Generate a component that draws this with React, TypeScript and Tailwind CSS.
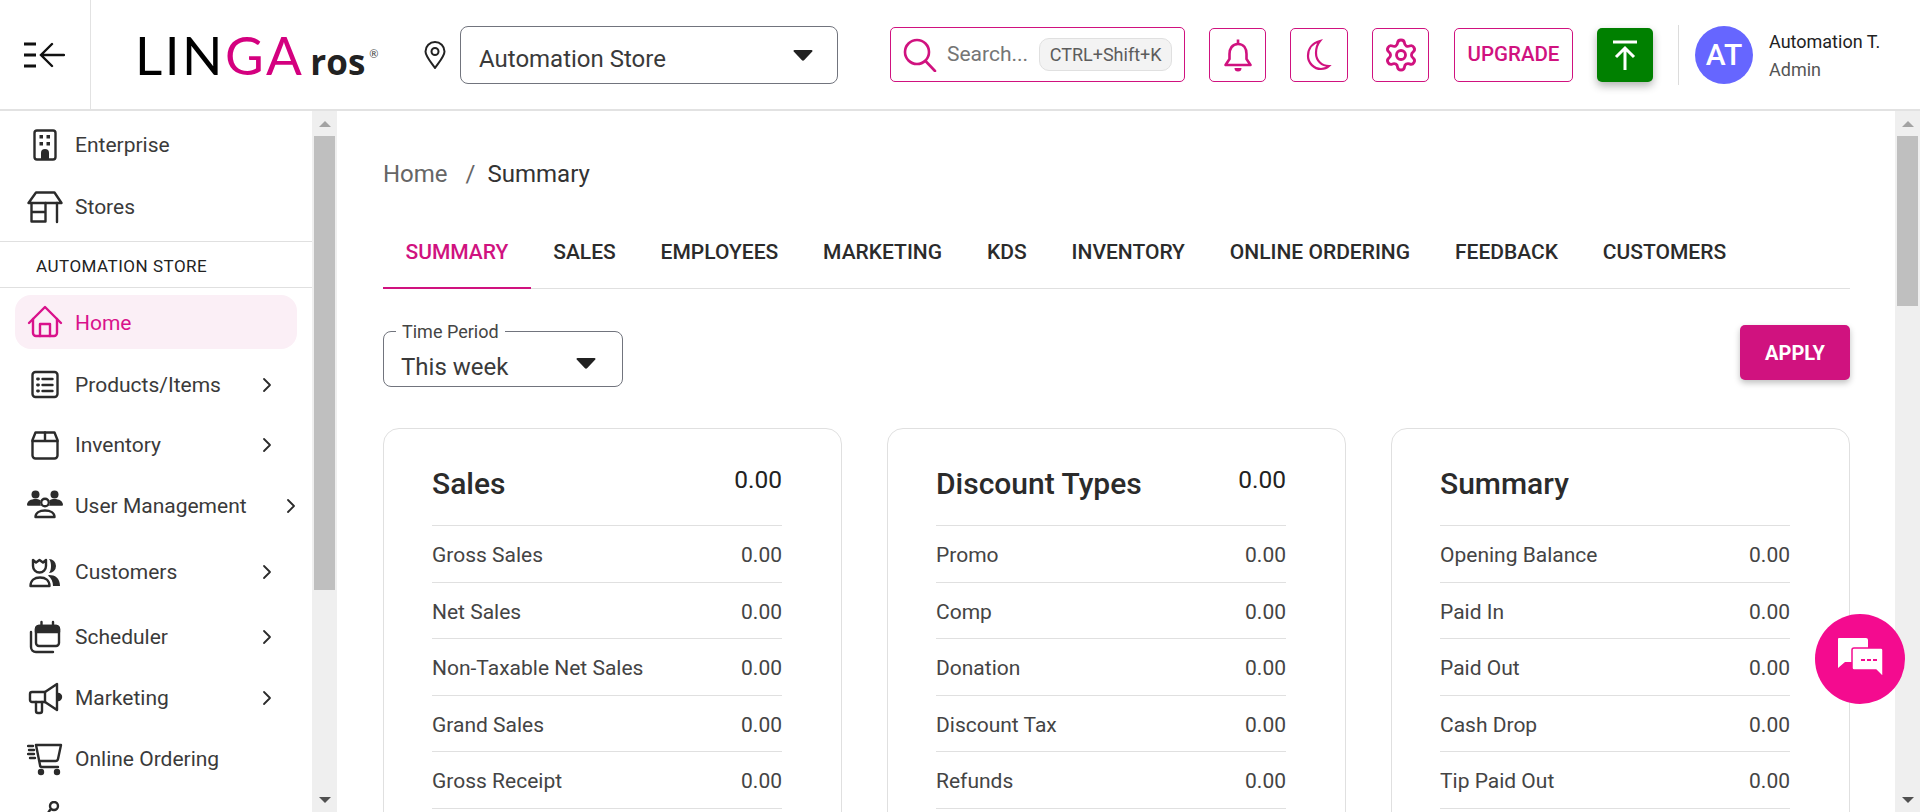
import { ChevronRight, Settings } from 'lucide-react';
import type { ReactNode } from 'react';

const tabs = ['SUMMARY', 'SALES', 'EMPLOYEES', 'MARKETING', 'KDS', 'INVENTORY', 'ONLINE ORDERING', 'FEEDBACK', 'CUSTOMERS'];

const cards = [
  { title: 'Sales', total: '0.00', rows: ['Gross Sales', 'Net Sales', 'Non-Taxable Net Sales', 'Grand Sales', 'Gross Receipt'] },
  { title: 'Discount Types', total: '0.00', rows: ['Promo', 'Comp', 'Donation', 'Discount Tax', 'Refunds'] },
  { title: 'Summary', total: '', rows: ['Opening Balance', 'Paid In', 'Paid Out', 'Cash Drop', 'Tip Paid Out'] },
];

function Icon({ children, w = 36, h = 36, vb = '0 0 36 36', className = '' }: { children: ReactNode; w?: number; h?: number; vb?: string; className?: string }) {
  return (
    <svg width={w} height={h} viewBox={vb} fill="none" stroke="currentColor" strokeWidth="2.4" strokeLinecap="round" strokeLinejoin="round" className={className}>
      {children}
    </svg>
  );
}

const EnterpriseIcon = () => (
  <Icon>
    <rect x="7.5" y="3.5" width="21" height="29" rx="2.5" />
    <g fill="currentColor" stroke="none">
      <rect x="12.5" y="8" width="3.5" height="3.5" />
      <rect x="19.5" y="8" width="3.5" height="3.5" />
      <rect x="12.5" y="15" width="3.5" height="3.5" />
      <rect x="19.5" y="15" width="3.5" height="3.5" />
      <path d="M14 32v-6a4 4 0 0 1 8 0v6z" />
    </g>
  </Icon>
);

const StoreIcon = () => (
  <Icon>
    <path d="M9 3.5h18.5l7 10.5H1.5z" />
    <path d="M4.5 14v18.5h14V14M4.5 23h14M30 14v19" />
  </Icon>
);

const HomeIcon = () => (
  <Icon>
    <path d="M2 19 18 3l16 16" />
    <path d="M6 15v14a3 3 0 0 0 3 3h18a3 3 0 0 0 3-3V15" />
    <path d="M13 32V20h10v12" />
  </Icon>
);

const ProductsIcon = () => (
  <Icon>
    <rect x="5.5" y="5" width="25" height="25" rx="3" />
    <path d="M15.5 12h10M15.5 18h10M15.5 24h10" />
    <path d="M10.5 12h1M10.5 18h1M10.5 24h1" strokeWidth="2.8" />
  </Icon>
);

const InventoryIcon = () => (
  <Icon>
    <path d="M8.5 5.5h19l3 7.5v15.5a3 3 0 0 1-3 3h-19a3 3 0 0 1-3-3V13z" />
    <path d="M5.5 14h25M18 5.5V14" />
  </Icon>
);

const UsersIcon = () => (
  <Icon>
    <g fill="currentColor" stroke="none">
      <circle cx="8.5" cy="6.5" r="4" />
      <circle cx="27.5" cy="6.5" r="4" />
      <path d="M0 17c0-4 4-6 8.5-6 2 0 3.500.4 5 1.200-1 2-.5 4 .5 5.500H1a1 1 0 0 1-1-.7z" />
      <path d="M36 17c0-4-4-6-8.500-6-2 0-3.500.4-5 1.200 1 2 .5 4-.5 5.500h13a1 1 0 0 0 1-.7z" />
    </g>
    <circle cx="18" cy="14.500" r="3.800" />
    <path d="M8.500 29c0-4 4-6.500 9.500-6.500s9.500 2.500 9.500 6.500z" />
  </Icon>
);

const CustomersIcon = () => (
  <Icon>
    <path d="M6 6v6a6.500 6.500 0 0 0 13 0V6l-3 2.500L12.500 6 9 8.500z" />
    <path d="M3.500 32c0-5.500 4-8.500 9.500-8.500s9.500 3 9.500 8.500z" />
    <g fill="currentColor" stroke="none">
      <path d="M22 5a7 7 0 0 1 0 14c1.500-2 2-4 2-7s-.5-5-2-7z" />
      <path d="M22 21c6 0 11 3 11 11h-7c0-4-1.500-8-5-10.500z" />
    </g>
  </Icon>
);

const SchedulerIcon = () => (
  <Icon>
    <rect x="9" y="7" width="23" height="20" rx="3" />
    <path d="M9 13h23V10a3 3 0 0 0-3-3H12a3 3 0 0 0-3 3z" fill="currentColor" />
    <path d="M14.500 3v4M26 3v4" />
    <path d="M4 13v15a5 5 0 0 0 5 5h17" />
  </Icon>
);

const MegaphoneIcon = () => (
  <Icon>
    <path d="M5 12h13l12-8v26l-12-8H5a2 2 0 0 1-2-2v-6a2 2 0 0 1 2-2z" />
    <path d="M9 22v9a2 2 0 0 0 2 2h2a2 2 0 0 0 2-2v-9M18 12v10" />
    <path d="M31 14a3 3 0 0 1 0 6z" fill="currentColor" />
  </Icon>
);

const CartIcon = () => (
  <Icon>
    <path d="M9 4h25l-3 14a2.500 2.500 0 0 1-2.500 2H13M9 4l4 20a2 2 0 0 0 2 2h16" />
    <path d="M1 5h5M2 9h5M1 13h6M3 17h5" />
    <circle cx="14" cy="31" r="2" fill="currentColor" />
    <circle cx="30" cy="31" r="2" fill="currentColor" />
  </Icon>
);

const PartialIcon = () => (
  <Icon>
    <circle cx="27" cy="5" r="4" />
    <path d="M23 9 13 24" />
  </Icon>
);

const menuItems = [
  { label: 'Products/Items', icon: <ProductsIcon />, row: 'h-[60px] mt-[6px]', chevron: true },
  { label: 'Inventory', icon: <InventoryIcon />, row: 'h-[60px]', chevron: true },
  { label: 'User Management', icon: <UsersIcon />, row: 'h-[62px]', chevron: true, wide: true },
  { label: 'Customers', icon: <CustomersIcon />, row: 'h-[70px]', chevron: true },
  { label: 'Scheduler', icon: <SchedulerIcon />, row: 'h-[60px]', chevron: true },
  { label: 'Marketing', icon: <MegaphoneIcon />, row: 'h-[62px]', chevron: true },
  { label: 'Online Ordering', icon: <CartIcon />, row: 'h-[60px]', chevron: false },
  { label: '', icon: <PartialIcon />, row: 'h-[60px]', chevron: false },
];

function SideRow({ icon, label, row, chevron, wide }: { icon: ReactNode; label: string; row: string; chevron?: boolean; wide?: boolean }) {
  return (
    <div className={`flex items-center shrink-0 pl-[27px] text-[#2b2b2b] ${row}`}>
      <span className="w-[36px] flex justify-center shrink-0">{icon}</span>
      <span className="ml-[12px] pt-[1px] text-[21px] leading-none text-[#3a3a3a]">{label}</span>
      {chevron && (
        <ChevronRight className={`w-[24px] h-[24px] ml-auto ${wide ? 'mr-[9px]' : 'mr-[33px]'}`} strokeWidth={1.8} />
      )}
    </div>
  );
}

function Scrollbar({ thumb }: { thumb: string }) {
  return (
    <div className="w-[25px] shrink-0 bg-[#efefef] flex flex-col items-center">
      <div className="h-[25px] flex items-center justify-center shrink-0">
        <div className="w-0 h-0 border-x-[6px] border-x-transparent border-b-[6px] border-b-[#a3a3a3]" />
      </div>
      <div className={`w-[21px] bg-[#bfbfbf] shrink-0 ${thumb}`} />
      <div className="flex-1" />
      <div className="h-[25px] flex items-center justify-center shrink-0">
        <div className="w-0 h-0 border-x-[6px] border-x-transparent border-t-[6px] border-t-[#505050]" />
      </div>
    </div>
  );
}

function Caret({ className = '' }: { className?: string }) {
  return (
    <svg width="20" height="12" viewBox="0 0 20 12" className={`shrink-0 ${className}`}>
      <path d="M1.500 1h17a1 1 0 0 1 .8 1.600l-8 8.500a1.800 1.800 0 0 1-2.600 0l-8-8.500A1 1 0 0 1 1.500 1z" fill="#212121" />
    </svg>
  );
}

function Header() {
  return (
    <header className="h-[111px] shrink-0 flex items-center border-b-2 border-[#e2e2e2] bg-white">
      <div className="w-[91px] h-full border-r border-[#e2e2e2] flex items-center justify-center shrink-0 pr-[3px]">
        <svg width="42" height="28" viewBox="0 0 42 28" fill="none" stroke="#111" strokeWidth="2.4">
          <path d="M1 3h12M1 14h12M1 25h12" strokeWidth="3" />
          <path d="M41 14H19M29 3 18 14l11 11" strokeLinecap="round" />
        </svg>
      </div>
      <div className="flex items-baseline ml-[44px] w-[291px] shrink-0 font-['Lato',sans-serif]">
        <span className="text-[53px] leading-none font-normal tracking-[2.500px] text-black">
          LIN<span className="text-[#d4007f]">GA</span>
        </span>
        <span className="ml-[6px] text-[35px] leading-none font-bold text-[#222] font-['Open_Sans',sans-serif]">ros</span>
        <span className="ml-[4px] text-[11px] self-start mt-[18px] text-[#444]">®</span>
      </div>
      <svg width="22" height="28" viewBox="0 0 22 28" fill="none" stroke="#222" strokeWidth="2" className="ml-[-2px] shrink-0">
        <path d="M11 27C6 20 1.500 15 1.500 10.500a9.500 9.500 0 0 1 19 0C20.500 15 16 20 11 27z" />
        <circle cx="11" cy="10.500" r="3.500" />
      </svg>
      <div className="ml-[14px] w-[378px] h-[58px] border border-[#71747d] rounded-[8px] flex items-center pl-[18px] pr-[24px] shrink-0">
        <span className="text-[24px] text-[#3a3a3a] flex-1 pt-[8px]">Automation Store</span>
        <Caret />
      </div>
      <div className="ml-[52px] w-[295px] h-[55px] border border-[#d0127f] rounded-[5px] flex items-center pl-[12px] shrink-0">
        <svg width="34" height="34" viewBox="0 0 34 34" fill="none" stroke="#d0127f" strokeWidth="2.600" strokeLinecap="round" className="shrink-0">
          <circle cx="14" cy="14" r="12" />
          <path d="M22.500 23 32 33" />
        </svg>
        <span className="ml-[10px] pt-[1px] text-[21px] text-[#757575]">Search...</span>
        <span className="ml-[11px] h-[33px] w-[133px] bg-[#f3f3f3] border border-[#e0e0e0] rounded-[10px] flex items-center justify-center text-[18px] text-[#5c5c5c]">CTRL+Shift+K</span>
      </div>
      <button className="ml-[24px] w-[57px] h-[54px] border border-[#d0127f] rounded-[5px] flex items-center justify-center text-[#d0127f] shrink-0">
        <svg width="30" height="34" viewBox="0 0 30 34" fill="none" stroke="currentColor" strokeWidth="2.600" strokeLinejoin="round">
          <path d="M15 6c-6 0-8.500 5-8.500 10v5L2.500 27h25l-4-6v-5c0-5-2.500-10-8.500-10z" />
          <path d="M15 1.500V6" />
          <path d="M11.500 30a3.500 3.500 0 0 0 7 0z" fill="currentColor" stroke="none" />
        </svg>
      </button>
      <button className="ml-[24px] w-[58px] h-[54px] border border-[#d0127f] rounded-[5px] flex items-center justify-center text-[#d0127f] shrink-0">
        <svg width="28" height="32" viewBox="0 0 28 32" fill="none" stroke="currentColor" strokeWidth="2.200">
          <path d="M15 2C7 4 3 10 3 17c0 7 6 13 13 13 3 0 6-1 8-3-7 0-13-5-13-13 0-5 1.500-9 4-12z" />
        </svg>
      </button>
      <button className="ml-[24px] w-[57px] h-[54px] border border-[#d0127f] rounded-[5px] flex items-center justify-center text-[#d0127f] shrink-0">
        <Settings className="w-[36px] h-[36px]" strokeWidth={1.9} />
      </button>
      <button className="ml-[25px] w-[119px] h-[54px] border border-[#d0127f] rounded-[5px] flex items-center justify-center text-[#d0127f] text-[20.500px] font-medium shrink-0">UPGRADE</button>
      <button className="ml-[24px] w-[56px] h-[54px] bg-[#008000] rounded-[5px] shadow-[0_4px_8px_rgba(0,0,0,0.3)] flex items-center justify-center shrink-0">
        <svg width="24" height="30" viewBox="0 0 24 30" fill="none" stroke="#fff" strokeWidth="3">
          <path d="M0 2h24M12 30V9M3 17l9-9 9 9" />
        </svg>
      </button>
      <div className="ml-[25px] w-px h-[60px] bg-[#dcdcdc] shrink-0" />
      <div className="ml-[16px] w-[58px] h-[58px] rounded-full bg-[#6666ff] flex items-center justify-center text-white text-[30px] font-medium shrink-0">AT</div>
      <div className="ml-[16px] flex flex-col gap-[7px] pt-[2px]">
        <span className="text-[18px] leading-[22px] text-[#222]">Automation T.</span>
        <span className="text-[18px] leading-[20px] text-[#555]">Admin</span>
      </div>
    </header>
  );
}

function Sidebar() {
  return (
    <aside className="w-[337px] shrink-0 flex">
      <div className="flex-1 overflow-hidden flex flex-col pt-[3px]">
        <SideRow icon={<EnterpriseIcon />} label="Enterprise" row="h-[62px]" />
        <SideRow icon={<StoreIcon />} label="Stores" row="h-[62px]" />
        <div className="mt-[3px] h-[47px] shrink-0 flex items-center pl-[36px] border-y border-[#e0e0e0] text-[17px] text-[#222] tracking-[0.5px] pt-[4px]">AUTOMATION STORE</div>
        <div className="mt-[7px] mx-[15px] h-[54px] shrink-0 rounded-[16px] bg-[#fbeff6] flex items-center pl-[12px] text-[#d9128b]">
          <span className="w-[36px] flex justify-center shrink-0"><HomeIcon /></span>
          <span className="ml-[12px] pt-[2px] text-[21px] leading-none">Home</span>
        </div>
        {menuItems.map((item) => (
          <SideRow key={item.row + item.label} {...item} />
        ))}
      </div>
      <Scrollbar thumb="h-[454px]" />
    </aside>
  );
}

function Dashboard() {
  return (
    <main className="flex-1 overflow-hidden pl-[46px] pr-[45px]">
      <nav className="h-[89px] pt-[37px] flex items-center text-[24px]">
        <span className="text-[#666]">Home</span>
        <span className="ml-[18px] text-[#666]">/</span>
        <span className="ml-[12px] text-[#333]">Summary</span>
      </nav>
      <div className="flex h-[89px] border-b border-[#e0e0e0]">
        {tabs.map((tab, i) => (
          <div
            key={tab}
            className={`px-[22.450px] flex items-center pt-[18px] text-[21px] font-medium ${i === 0 ? 'text-[#d0127f] border-b-2 border-[#d0127f] h-[89px]' : 'text-[#2b2b2b]'}`}
          >
            {tab}
          </div>
        ))}
      </div>
      <div className="flex items-start justify-between mt-[36px]">
        <div className="relative mt-[6px] w-[240px] h-[56px] border border-[#71747d] rounded-[8px] flex items-center pl-[17px] pr-[26px]">
          <span className="absolute left-[12px] -top-[7px] -translate-y-[1px] bg-white px-[6px] text-[18px] leading-[16px] text-[#444]">Time Period</span>
          <span className="flex-1 text-[24px] leading-[30px] text-[#3a3a3a] mt-[16px]">This week</span>
          <Caret className="mt-[8px]" />
        </div>
        <button className="w-[110px] h-[55px] bg-[#d0127f] rounded-[5px] shadow-[0_3px_6px_rgba(0,0,0,0.25)] text-white text-[20px] font-bold">APPLY</button>
      </div>
      <div className="grid grid-cols-3 gap-[45px] mt-[41px]">
        {cards.map((card) => (
          <section key={card.title} className="border border-[#e0e0e0] rounded-[16px] pl-[48px] pr-[59px] pb-[48px]">
            <div className="h-[97px] border-b border-[#e0e0e0] flex justify-between pt-[33px]">
              <h2 className="text-[30px] leading-[44px] font-medium text-[#2b2b2b]">{card.title}</h2>
              <span className="text-[24.500px] leading-[36px] text-[#222]">{card.total}</span>
            </div>
            {card.rows.map((row) => (
              <div key={row} className="h-[56.500px] pt-[4px] border-b border-[#e0e0e0] flex items-center justify-between text-[21px] text-[#444]">
                <span>{row}</span>
                <span>0.00</span>
              </div>
            ))}
          </section>
        ))}
      </div>
    </main>
  );
}

export default function App() {
  return (
    <div className="relative h-[812px] overflow-hidden bg-white font-['Roboto',sans-serif] flex flex-col">
      <Header />
      <div className="flex-1 flex min-h-0">
        <Sidebar />
        <Dashboard />
        <Scrollbar thumb="h-[170px]" />
      </div>
      <button className="absolute left-[1815px] top-[614px] w-[90px] h-[90px] rounded-full bg-[#f40b8f] flex items-center justify-center">
        <svg width="48" height="44" viewBox="0 0 48 44">
          <path d="M3 1h27a2 2 0 0 1 2 2v20a2 2 0 0 1-2 2H9l-7 6V2a1 1 0 0 1 1-1z" fill="#fff" />
          <path d="M18 11h27a2 2 0 0 1 2 2v27l-7-7H18a2 2 0 0 1-2-2V13a2 2 0 0 1 2-2z" fill="#fff" stroke="#f40b8f" strokeWidth="1.500" />
          <path d="M25 23h4M31 23h4M37 23h4" stroke="#f40b8f" strokeWidth="2.200" />
        </svg>
      </button>
    </div>
  );
}
